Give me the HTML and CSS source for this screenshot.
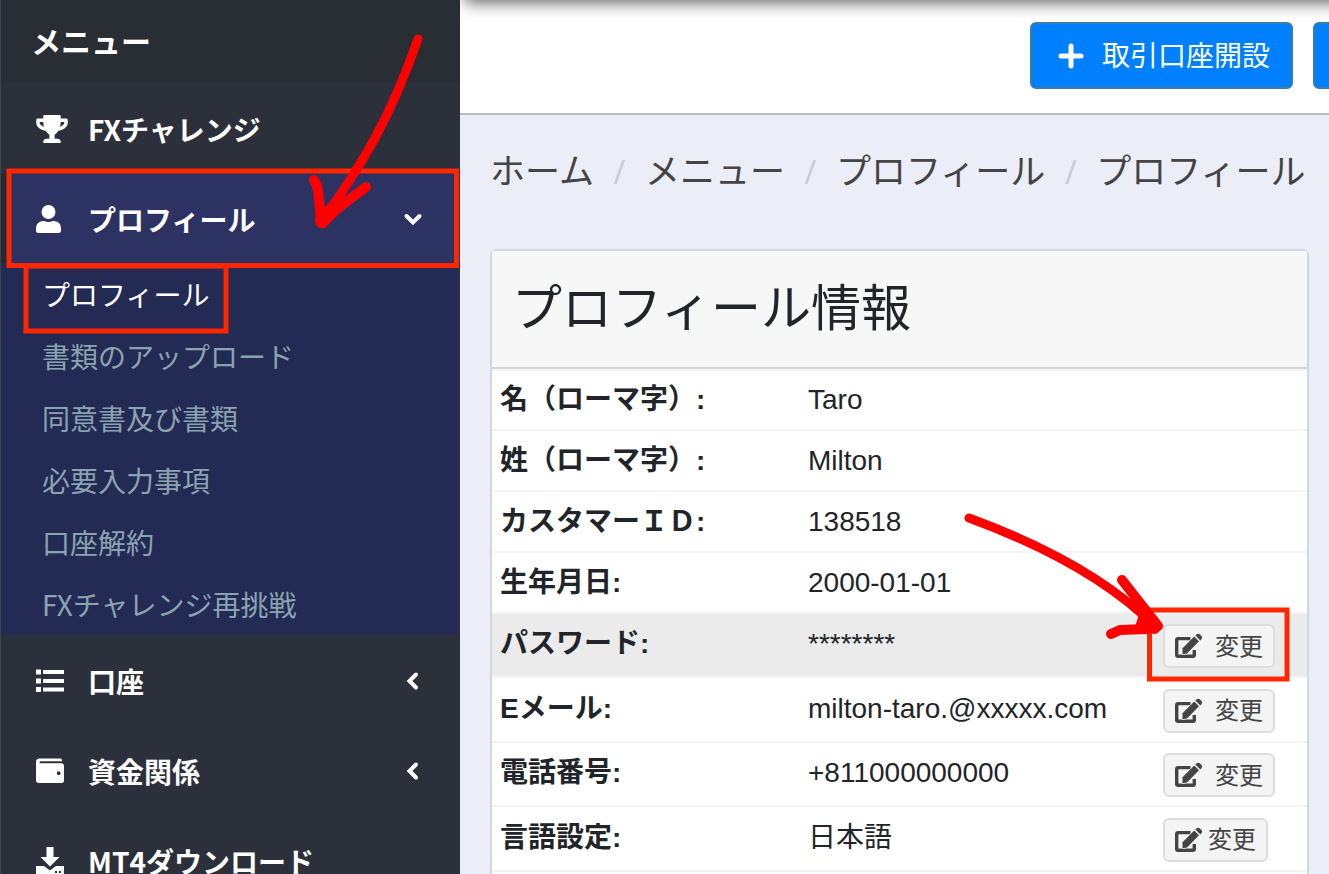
FILE: index.html
```
<!DOCTYPE html>
<html lang="ja">
<head>
<meta charset="UTF-8"/>
<title>プロフィール</title>
<meta name="viewport" content="width=device-width, initial-scale=1"/>
<link rel="stylesheet" href="styles.css">
</head>
<body>
<svg class="sprite" aria-hidden="true">
	<symbol id="edit" viewBox="0 0 28 26">
		<path d="M15.500 5.600H3Q1.700 5.600 1.700 7V22Q1.700 23.300 3 23.300H18Q19.300 23.300 19.300 22V17" fill="none" stroke="currentColor" stroke-width="3.400"/>
		<path d="M7.500 15.300 19.200 3.500 24 8.300 12 20.500 7.500 21.200Z" fill="currentColor" stroke="#f4f4f4" stroke-width="1.200" paint-order="stroke"/>
		<path d="M20.400 2.600 21.700 1.300Q23.200 0 24.700 1.300L26.600 3.200Q27.800 4.700 26.600 6.100L25.300 7.400Z" fill="currentColor"/>
	</symbol>
	<symbol id="chevron" viewBox="0 0 20 20">
		<path d="M3.500 7 10 13.500 16.500 7" fill="none" stroke="currentColor" stroke-width="4" stroke-linecap="round"/>
	</symbol>
</svg>
<div class="page">
	<aside class="sidebar">
		<div class="menuTitle">メニュー</div>
		<nav>
			<a class="item" href="#">
				<svg class="icon wide" viewBox="0 0 576 512"><path fill="currentColor" d="M552 64H448V24c0-13.300-10.700-24-24-24H152c-13.300 0-24 10.700-24 24v40H24C10.700 64 0 74.700 0 88v56c0 35.700 22.500 72.400 61.900 100.700 31.500 22.700 69.800 37.100 110 41.700C203.300 338.500 240 360 240 360v72h-48c-35.300 0-64 20.700-64 56v12c0 6.600 5.400 12 12 12h296c6.600 0 12-5.400 12-12v-12c0-35.300-28.700-56-64-56h-48v-72s36.700-21.500 68.100-73.600c40.300-4.600 78.600-19 110-41.700 39.300-28.300 61.900-65 61.900-100.700V88c0-13.300-10.700-24-24-24zM99.300 192.800C74.900 175.200 64 155.600 64 144v-16h64.200c1 32.600 5.800 61.200 12.800 86.200-15.100-5.200-29.200-12.400-41.700-21.400zM512 144c0 16.100-17.700 36.100-35.300 48.800-12.500 9-26.700 16.200-41.800 21.400 7-25 11.800-53.600 12.800-86.200H512v16z"/></svg>
				<span>FXチャレンジ</span>
			</a>
			<a class="item active" href="#">
				<svg class="icon" viewBox="0 0 28 28"><circle cx="12.500" cy="7" r="7" fill="currentColor"/><path fill="currentColor" d="M7 16H8Q12.500 18 17 16H18Q25 17 25 23V25.500Q25 28 22.500 28H2.500Q0 28 0 25.500V23Q0 17 7 16Z"/></svg>
				<span>プロフィール</span>
				<svg class="arrow"><use href="#chevron"/></svg>
			</a>
			<div class="submenu">
				<a class="current" href="#">プロフィール</a>
				<a href="#">書類のアップロード</a>
				<a href="#">同意書及び書類</a>
				<a href="#">必要入力事項</a>
				<a href="#">口座解約</a>
				<a href="#">FXチャレンジ再挑戦</a>
			</div>
			<a class="item" href="#">
				<svg class="icon" viewBox="0 0 28 28"><path fill="currentColor" d="M0 2.500h5v5h-5zM0 11.500h5v5h-5zM0 20h5v5h-5zM7 3h21v4h-21zM7 12h21v4h-21zM7 20.500h21v4h-21z"/></svg>
				<span>口座</span>
				<svg class="arrow closed"><use href="#chevron"/></svg>
			</a>
			<a class="item" href="#">
				<svg class="icon" viewBox="0 0 28 28"><path fill="currentColor" fill-rule="evenodd" d="M3.500 1.500H24.500Q26 1.500 26 3.200V4.300H4.500Q3.500 4.300 3.500 5.200T4.500 6.200H25.500Q28 6.200 28 8.700V23.500Q28 26 25.500 26H3Q0 26 0 23V5Q0 1.500 3.500 1.500ZM22.700 14.300A1.900 1.900 0 1 0 22.700 18.100A1.900 1.900 0 1 0 22.700 14.300Z"/></svg>
				<span>資金関係</span>
				<svg class="arrow closed"><use href="#chevron"/></svg>
			</a>
			<a class="item" href="#">
				<svg class="icon" viewBox="0 0 28 28"><path fill="currentColor" d="M10.500 0H17.500V10H23.500L14 19.500 4.500 10H10.500Z"/><path fill="currentColor" fill-rule="evenodd" d="M0 19H8L14 23.500 20 19H28V28H0ZM19 24h2v2h-2zM23 24h2v2h-2z"/></svg>
				<span>MT4ダウンロード</span>
			</a>
		</nav>
	</aside>
	<main class="main">
		<header class="topbar">
			<div class="actions">
				<button type="button" class="primary">
					<svg class="plus" viewBox="0 0 26 26"><path d="M13 3V23M3 13H23" stroke="currentColor" stroke-width="5" stroke-linecap="round"/></svg>
					<span>取引口座開設</span>
				</button>
				<button type="button" class="primary" aria-label="入金"></button>
			</div>
		</header>
		<div class="content">
			<ol class="breadcrumb">
				<li><a href="#">ホーム</a></li>
				<li><a href="#">メニュー</a></li>
				<li><a href="#">プロフィール</a></li>
				<li><a href="#">プロフィール</a></li>
			</ol>
			<section class="card">
				<h1>プロフィール情報</h1>
				<table>
					<tr><th scope="row">名（ローマ字）:</th><td>Taro</td><td class="edit"></td></tr>
					<tr><th scope="row">姓（ローマ字）:</th><td>Milton</td><td class="edit"></td></tr>
					<tr><th scope="row">カスタマーＩＤ:</th><td>138518</td><td class="edit"></td></tr>
					<tr><th scope="row">生年月日:</th><td>2000-01-01</td><td class="edit"></td></tr>
					<tr class="editable hover"><th scope="row">パスワード:</th><td>********</td><td class="edit"><button type="button" class="change"><svg><use href="#edit"/></svg><span>変更</span></button></td></tr>
					<tr class="editable"><th scope="row">Eメール:</th><td>milton-taro.@xxxxx.com</td><td class="edit"><button type="button" class="change"><svg><use href="#edit"/></svg><span>変更</span></button></td></tr>
					<tr class="editable"><th scope="row">電話番号:</th><td>+811000000000</td><td class="edit"><button type="button" class="change"><svg><use href="#edit"/></svg><span>変更</span></button></td></tr>
					<tr class="editable"><th scope="row">言語設定:</th><td>日本語</td><td class="edit"><button type="button" class="change tight"><svg><use href="#edit"/></svg><span>変更</span></button></td></tr>
					<tr><th></th><td></td><td></td></tr>
				</table>
			</section>
		</div>
	</main>
</div>
<!-- red boxes and hand-drawn arrows over the page -->
<svg class="marks" width="1329" height="874" aria-hidden="true">
	<g fill="none" stroke="#ff2600" stroke-width="5">
		<rect x="9" y="171" width="447.500" height="94.500"/>
		<rect x="26" y="266" width="200" height="65"/>
		<rect x="1149.500" y="610" width="137.500" height="69"/>
	</g>
	<g fill="none" stroke="#f00" stroke-linecap="round" stroke-linejoin="round">
		<path stroke-width="9" d="M418 39Q398 96 374 140Q351 181 323 219"/>
		<path stroke-width="10" d="M314 180Q317 184 318 190L321 221 330 214 366 187"/>
		<path stroke-width="9" d="M969 518Q1092 563 1156 627"/>
		<path stroke-width="10" d="M1122 580 1158 626 1146 629 1120 630 1111 634"/>
	</g>
	<path fill="#f00" d="M316 210 334 203 342 211 326 227Q318 231 315 222ZM1143 602 1150 610 1162 625Q1160 634 1154 634L1134 630Z"/>
</svg>
</body>
</html>
```
FILE: styles.css
```
* { box-sizing: border-box; }
html, body { margin: 0; height: 100%; overflow: hidden; }
body, button {
	font-family: 'Liberation Sans', 'Noto Sans CJK JP', sans-serif;
	font-size: 28px;
}
body { position: relative; background: #ebeef7; color: #212529; line-height: 40px; }
a { color: inherit; text-decoration: none; }
.sprite { display: none; }
.page { display: flex; height: 100vh; overflow: hidden; }

.sidebar {
	flex: 0 0 460px;
	overflow: hidden;
	background: #2b303b;
	border-left: 1px solid #3d424d;
	color: #fff;
	font-family: 'Noto Sans CJK JP', sans-serif;
}
.menuTitle {
	height: 83px;
	padding: 20px 30px;
	background: #292d34;
	font-size: 30px;
	font-weight: bold;
}
.item {
	display: flex;
	align-items: center;
	height: 90px;
	padding: 1px 35px 0;
	font-weight: bold;
}
.item.active {
	padding-left: 29px;
	border-left: 6px solid #262a30;
	background: #2c3363;
}
.icon { width: 28px; height: 28px; margin-right: 24px; }
.icon.wide { width: 32px; margin-right: 20px; }
.arrow { width: 20px; height: 20px; margin-left: auto; margin-right: 2px; }
.arrow.closed { transform: rotate(90deg); }
.submenu {
	margin-right: 2px;
	background: #232a54;
	color: #8aa4af;
}
.submenu a {
	display: block;
	height: 62px;
	padding: 11px 41px;
}
.submenu .current { color: #fff; }

.main { flex: 1; min-width: 0; }
.topbar {
	position: relative;
	display: flex;
	justify-content: flex-end;
	height: 115px;
	overflow: hidden;
	background: #fff;
	border-bottom: 2px solid #bbb;
}
.topbar::before {
	content: '';
	position: absolute;
	top: -20px;
	left: 8px;
	right: -20px;
	height: 20px;
	box-shadow: 0 0 16px 3px rgba(0,0,0,0.6);
}
.actions {
	display: flex;
	gap: 20px;
	width: 299px;
	padding-top: 22px;
	overflow: hidden;
}
.primary {
	display: flex;
	flex: 0 0 263px;
	align-items: center;
	gap: 18px;
	height: 67px;
	padding: 0 20px 0 26px;
	border: 2px solid #367fa9;
	border-radius: 6px;
	background: #007fff;
	color: #fff;
	white-space: nowrap;
}
.primary span, .change span { padding-bottom: 4px; }
.plus { width: 26px; height: 26px; }

.content { padding: 37px 20px 0 30px; }
.breadcrumb {
	display: flex;
	margin: 0 0 57px;
	padding: 0;
	list-style: none;
	color: #444;
	font-size: 35px;
	white-space: nowrap;
}
.breadcrumb li { display: flex; }
.breadcrumb li + li::before {
	content: '/';
	width: 51px;
	color: #ccc;
	font-family: 'Open Sans', sans-serif;
	font-size: 32px;
	text-align: center;
}
.card {
	border: 2px solid #d2d6e0;
	border-radius: 6px;
	background: #fff;
}
.card h1 {
	margin: 0;
	padding: 23px 20px;
	background: #f7f7f7;
	border-bottom: 2px solid #d2d6e0;
	font-size: 50px;
	font-weight: normal;
	line-height: 70px;
}
table { width: 100%; table-layout: fixed; border-collapse: separate; border-spacing: 0; }
th, td {
	height: 61px;
	padding: 0 8px;
	border-top: 2px solid #f4f4f4;
	text-align: left;
	white-space: nowrap;
}
tr:first-child th, tr:first-child td { height: 60px; }
th { width: 308px; }
.edit { width: 152px; }
.editable th, .editable td { height: 64px; padding-bottom: 2px; }
.editable:nth-child(even) th, .editable:nth-child(even) td { height: 65px; }
.editable .edit { padding-top: 2px; padding-bottom: 0; }
.hover { background: #ebebeb; }
.change {
	display: flex;
	align-items: center;
	height: 44px;
	padding: 0 10px;
	border: 2px solid #ddd;
	border-radius: 6px;
	background: #f4f4f4;
	color: #444;
	font-size: 24px;
}
.change svg { width: 28px; height: 26px; margin-right: 12px; }
.change.tight svg { margin-right: 5px; }

.marks { position: absolute; top: 0; left: 0; pointer-events: none; }
```
